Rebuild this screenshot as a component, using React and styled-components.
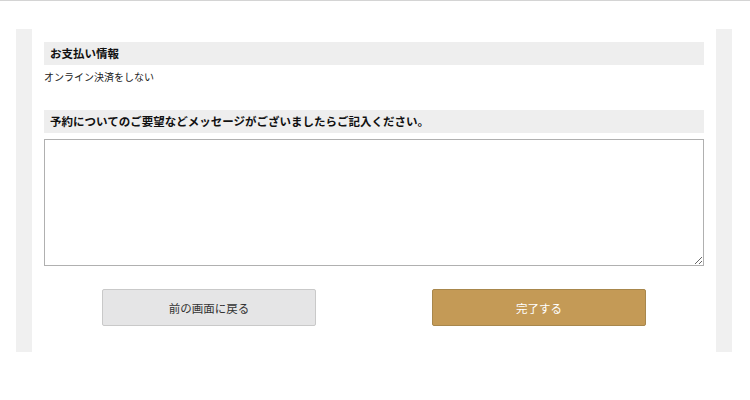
import React from "react"
import styled, { createGlobalStyle } from "styled-components"

const GlobalStyle = createGlobalStyle`
  body {
    margin: 0;
    background: #ffffff;
    font-family: "Noto Sans CJK JP", "Noto Sans", sans-serif;
    color: #222;
  }
`

export default function App() {
  return (
    <>
      <GlobalStyle />
      <TopLine />
      <Wrapper>
        <Panel>
          <SectionTitle>お支払い情報</SectionTitle>
          <BodyText>オンライン決済をしない</BodyText>
          <SectionTitle spaced>予約についてのご要望などメッセージがございましたらご記入ください。</SectionTitle>
          <MessageBox />
          <ButtonRow>
            <Button>前の画面に戻る</Button>
            <Button primary>完了する</Button>
          </ButtonRow>
        </Panel>
      </Wrapper>
    </>
  )
}

const TopLine = styled.div`
  height: 1px;
  background: #d4d4d4;
`

const Wrapper = styled.div`
  padding: 28px 18px 0 16px;
`

const Panel = styled.div`
  border-left: 16px solid #f0f0f0;
  border-right: 16px solid #f0f0f0;
  padding: 13px 12px 26px 12px;
  display: flex;
  flex-direction: column;
`

const SectionTitle = styled.h2`
  margin: ${props => (props.spaced ? "25px" : "0")} 0 0 0;
  height: 23px;
  line-height: 23px;
  padding: 0 6px;
  background: #eeeeee;
  font-size: 11.5px;
  font-weight: bold;
  color: #111;
`

const BodyText = styled.div`
  margin-top: 4px;
  line-height: 16px;
  font-size: 10px;
  color: #222;
`

const MessageBox = styled.textarea`
  margin-top: 6px;
  height: 127px;
  box-sizing: border-box;
  border: 1px solid #b0b0b0;
  padding: 4px;
  font-family: inherit;
  resize: vertical;
`

const ButtonRow = styled.div`
  margin-top: 23px;
  display: grid;
  grid-template-columns: 1fr 1fr;
  justify-items: center;
`

const Button = styled.button`
  width: 214px;
  height: 37px;
  border-radius: 2px;
  border: 1px solid ${props => (props.primary ? "#a8874c" : "#c9c9c9")};
  background: ${props => (props.primary ? "#c49a56" : "#e5e5e6")};
  color: ${props => (props.primary ? "#ffffff" : "#333333")};
  font-family: inherit;
  font-size: 11.5px;
  cursor: pointer;
`
